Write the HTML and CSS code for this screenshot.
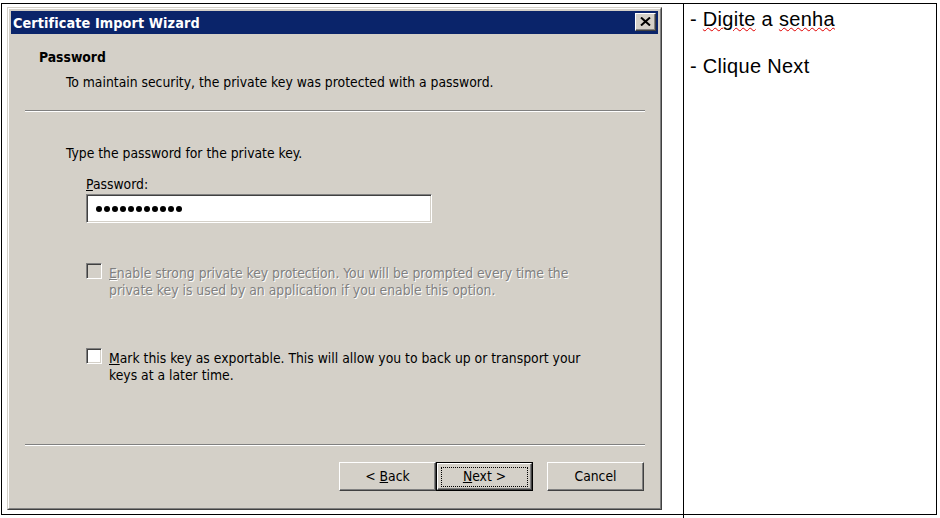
FILE: index.html
```html
<!DOCTYPE html>
<html>
<head>
<meta charset="utf-8">
<title>Certificate Import Wizard</title>
<link rel="stylesheet" href="styles.css">
</head>
<body>
<div class="doc">
  <div class="row">
    <div class="cell cell-left">
      <div class="win">
        <div class="win-in">
          <div class="titlebar">
            <span class="title">Certificate Import Wizard</span>
            <span class="close">
              <svg width="11" height="9" viewBox="0 0 11 9"><path d="M1 0.5 L10 8.5 M10 0.5 L1 8.5" stroke="#000" stroke-width="2" fill="none"/></svg>
            </span>
          </div>
          <div class="body">
            <div class="header">
              <div class="h-title">Password</div>
              <div class="h-sub">To maintain security, the private key was protected with a password.</div>
            </div>
            <div class="sep"></div>
            <div class="content">
              <div class="intro">Type the password for the private key.</div>
              <div class="pw-label"><u>P</u>assword:</div>
              <div class="pw-input">
                <span class="dot"></span><span class="dot"></span><span class="dot"></span><span class="dot"></span><span class="dot"></span><span class="dot"></span><span class="dot"></span><span class="dot"></span><span class="dot"></span><span class="dot"></span><span class="dot"></span>
              </div>
              <div class="check check-disabled">
                <span class="box"></span>
                <span class="ctext"><u>E</u>nable strong private key protection. You will be prompted every time the<br>private key is used by an application if you enable this option.</span>
              </div>
              <div class="check check-second">
                <span class="box"></span>
                <span class="ctext"><u>M</u>ark this key as exportable. This will allow you to back up or transport your<br>keys at a later time.</span>
              </div>
            </div>
            <div class="sep"></div>
            <div class="buttons">
              <span class="btn"><span class="btn-label">&lt; <u>B</u>ack</span></span>
              <span class="btn-default"><span class="btn btn-inner"><span class="focus"><span class="btn-label"><u>N</u>ext &gt;</span></span></span></span>
              <span class="btn btn-cancel"><span class="btn-label">Cancel</span></span>
            </div>
          </div>
        </div>
      </div>
    </div>
    <div class="cell cell-right">
      <p class="line">- <span class="spell">Digite</span> a <span class="spell">senha</span></p>
      <p class="line">&nbsp;</p>
      <p class="line">- Clique Next</p>
    </div>
  </div>
  <div class="row-next"></div>
</div>
</body>
</html>
```
FILE: styles.css
```css
* { box-sizing: border-box; }
html, body { margin: 0; padding: 0; background: #fff; }
body { width: 940px; height: 518px; overflow: hidden; }

.doc { margin: 3px 0 0 1px; width: 936px; }
.row { display: flex; height: 512px; border: 1px solid #000; }
.row-next { margin-left: 682px; height: 6px; border-left: 1px solid #000; }

.cell-left { width: 682px; border-right: 1px solid #000; padding: 3px 0 0 5px; }
.cell-right { flex: 1; padding: 4px 6px 0 6px; font-family: "Liberation Sans", Arial, sans-serif; font-size: 20px; letter-spacing: 0.3px; color: #000; }
.line { margin: 0; line-height: 23.5px; white-space: nowrap; }
.spell { text-decoration: underline wavy #e00000; text-decoration-thickness: 1px; text-underline-offset: 1px; }

/* classic window */
.win { width: 655px; height: 503px; border: 1px solid; border-color: #d4d0c8 #404040 #404040 #d4d0c8; background: #d4d0c8; }
.win-in { height: 100%; border: 1px solid; border-color: #fff #808080 #808080 #fff; padding: 2px; display: flex; flex-direction: column; font-family: "DejaVu Sans Condensed", "DejaVu Sans", sans-serif; font-stretch: condensed; font-size: 13.8px; color: #000; }

.titlebar { height: 23px; background: #0a246a; display: flex; align-items: center; justify-content: space-between; padding: 0 2px 0 2px; flex: none; }
.title { color: #fff; font-weight: bold; font-size: 14.3px; letter-spacing: 0.1px; }
.close { width: 21px; height: 18px; margin-top: -1px; background: #d4d0c8; border: 1px solid; border-color: #fff #404040 #404040 #fff; box-shadow: inset -1px -1px 0 #808080; display: flex; align-items: center; justify-content: center; padding: 0 1px 1px 0; }
.close svg { display: block; }

.body { flex: 1; display: flex; flex-direction: column; }
.header { padding: 15px 0 0 28px; line-height: 17px; }
.h-title { font-weight: bold; }
.h-sub { margin-top: 8px; padding-left: 27px; }

.sep { height: 2px; margin: 19px 13px 0 14px; border-top: 1px solid #808080; border-bottom: 1px solid #fff; flex: none; }

.content { flex: 1; padding-left: 55px; line-height: 17px; }
.intro { margin-top: 33px; }
.pw-label { margin: 14px 0 0 20px; }
.pw-input { margin: 1px 0 0 20px; width: 346px; height: 29px; background: #fff; border: 1px solid; border-color: #808080 #fff #fff #808080; box-shadow: inset 1px 1px 0 #404040, inset -1px -1px 0 #d4d0c8; display: flex; align-items: center; gap: 2px; padding: 0 0 0 9px; }
.dot { width: 6px; height: 6px; border-radius: 50%; background: #000; flex: none; }

.check { display: flex; margin: 40px 0 0 20px; }
.check-second { margin-top: 49px; }
.box { width: 16px; height: 16px; flex: none; background: #fff; border: 1px solid; border-color: #808080 #fff #fff #808080; box-shadow: inset 1px 1px 0 #404040, inset -1px -1px 0 #d4d0c8; }
.check-disabled .box { background: #d4d0c8; }
.ctext { margin-left: 7px; padding-top: 2px; white-space: nowrap; }
.check-disabled .ctext { color: #808080; text-shadow: 1px 1px 0 #fff; }

.buttons { display: flex; justify-content: flex-end; margin: 16px 14px 15px 0; flex: none; }
.btn { width: 97px; height: 29px; background: #d4d0c8; border: 1px solid; border-color: #fff #404040 #404040 #fff; box-shadow: inset -1px -1px 0 #808080; display: flex; align-items: center; justify-content: center; line-height: 17px; }
.btn-label { white-space: pre; }
.btn-default { width: 97px; height: 29px; border: 1px solid #000; display: flex; }
.btn-inner { width: 95px; height: 27px; }
.focus { width: 87px; height: 20px; border: 1px dotted #000; display: flex; align-items: center; justify-content: center; }
.btn-cancel { margin-left: 14px; }
```
